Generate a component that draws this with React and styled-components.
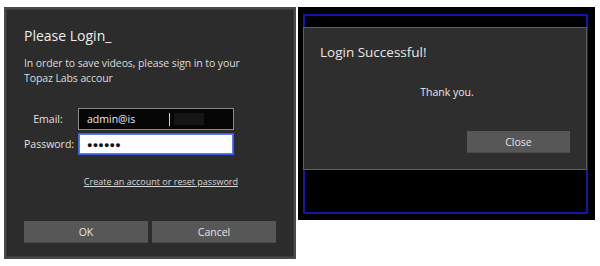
import React from 'react';
import styled, { createGlobalStyle } from 'styled-components';

const GlobalStyle = createGlobalStyle`
    html, body {
        margin: 0;
        padding: 0;
        background: #ffffff;
    }
    body {
        font-family: "Open Sans", "Noto Sans", sans-serif;
    }
`;

const Page = styled.div`
    display: flex;
    align-items: flex-start;
    padding: 7px 0 0 4px;
    width: 600px;
    height: 266px;
    box-sizing: border-box;
`;

const LoginWindow = styled.div`
    width: 292px;
    height: 252px;
    box-sizing: border-box;
    background: #2c2c2c;
    border: 2px solid #4a4a4a;
    box-shadow: inset 0 0 0 1px #3a3a3a;
    padding: 17px 18px 14px 18px;
    display: flex;
    flex-direction: column;
    color: #e6e6e6;
`;

const Title = styled.div`
    font-size: 14px;
    line-height: 20px;
    color: #ececec;
`;

const Text = styled.p`
    margin: 10px 0 0;
    font-size: 10.5px;
    line-height: 15px;
    color: #dcdcdc;
    letter-spacing: -0.1px;
`;

const Form = styled.div`
    display: grid;
    grid-template-columns: 48px 156px;
    column-gap: 6px;
    row-gap: 3px;
    align-items: center;
    margin-top: 22px;
`;

const Label = styled.label`
    font-size: 10.5px;
    color: #e0e0e0;
    text-align: center;
    white-space: nowrap;
`;

const Field = styled.div`
    height: 22px;
    box-sizing: border-box;
    display: flex;
    align-items: center;
    padding-left: 8px;
    font-size: 10.5px;
    background: ${p => (p.$light ? '#ffffff' : '#050505')};
    color: ${p => (p.$light ? '#111' : '#eaeaea')};
    border: 1px solid ${p => (p.$light ? '#3b5fe0' : '#8a8a8a')};
    box-shadow: ${p => (p.$light ? 'inset 0 0 0 1px #5a7af0' : 'none')};
`;

const Caret = styled.span`
    display: inline-block;
    width: 1px;
    height: 13px;
    background: #cfcfcf;
    margin-left: 34px;
`;

const Blur = styled.span`
    display: inline-block;
    width: 30px;
    height: 12px;
    margin-left: 4px;
    background: #151515;
`;

const Dots = styled.span`
    font-size: 9px;
    letter-spacing: 0.2px;
    font-weight: 700;
`;

const LinkRow = styled.div`
    margin-top: 20px;
    display: flex;
    justify-content: flex-end;
    padding-right: 38px;
`;

const Link = styled.a`
    font-size: 9px;
    color: #d8d8d8;
    text-decoration: underline;
`;

const Buttons = styled.div`
    margin-top: auto;
    display: grid;
    grid-template-columns: 124px 124px;
    gap: 4px;
`;

const Button = styled.button`
    height: 22px;
    width: ${p => p.$width || 'auto'};
    border: none;
    background: #575757;
    color: #e4e4e4;
    font-family: inherit;
    font-size: 10.5px;
    padding: 0;
    box-shadow: inset 0 -1px 0 #4a4a4a;
`;

const SuccessWindow = styled.div`
    margin-left: 2px;
    width: 297px;
    height: 213px;
    box-sizing: border-box;
    background: #000;
    padding: 7px 7px 6px 5px;
`;

const BlueFrame = styled.div`
    height: 100%;
    box-sizing: border-box;
    border: 2px solid #1414a6;
    padding-top: 11px;
`;

const Dialog = styled.div`
    height: 143px;
    margin: 0 -1px 0 -2px;
    box-sizing: border-box;
    background: #2e2e2e;
    border: 1px solid #606060;
    display: flex;
    flex-direction: column;
    padding: 14px 16px 16px 16px;
    color: #e8e8e8;
`;

const DialogTitle = styled.div`
    font-size: 13.5px;
    line-height: 20px;
`;

const Thanks = styled.div`
    margin-top: 23px;
    text-align: center;
    font-size: 10.5px;
    padding-left: 4px;
`;

const DialogFooter = styled.div`
    margin-top: auto;
    display: flex;
    justify-content: flex-end;
`;

export default function App() {
    return (
        <>
            <GlobalStyle />
            <Page>
                <LoginWindow>
                    <Title>Please Login_</Title>
                    <Text>
                        In order to save videos, please sign in to your
                        <br />
                        Topaz Labs accour
                    </Text>
                    <Form>
                        <Label>Email:</Label>
                        <Field>
                            admin@is
                            <Caret />
                            <Blur />
                        </Field>
                        <Label>Password:</Label>
                        <Field $light>
                            <Dots>●●●●●●</Dots>
                        </Field>
                    </Form>
                    <LinkRow>
                        <Link>Create an account or reset password</Link>
                    </LinkRow>
                    <Buttons>
                        <Button>OK</Button>
                        <Button>Cancel</Button>
                    </Buttons>
                </LoginWindow>
                <SuccessWindow>
                    <BlueFrame>
                        <Dialog>
                            <DialogTitle>Login Successful!</DialogTitle>
                            <Thanks>Thank you.</Thanks>
                            <DialogFooter>
                                <Button $width="103px">Close</Button>
                            </DialogFooter>
                        </Dialog>
                    </BlueFrame>
                </SuccessWindow>
            </Page>
        </>
    );
}
